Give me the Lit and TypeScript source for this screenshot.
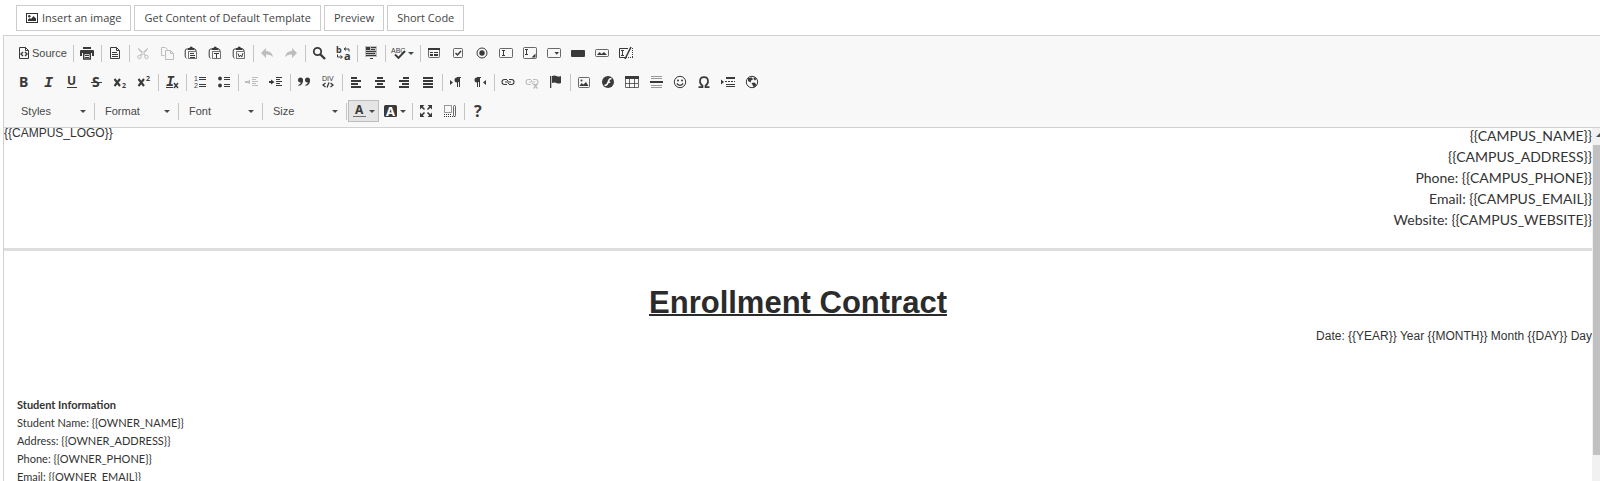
import { LitElement, html, css, svg, nothing, TemplateResult } from "lit";
import { customElement } from "lit/decorators.js";
import { classMap } from "lit/directives/class-map.js";

const page = svg`<path d="M3.5 2.5h6l3 3v8h-9z" fill="none" stroke="currentColor"/><path d="M9.500 2.500v3h3" fill="none" stroke="currentColor"/>`;
const clip = svg`<path d="M5 4H3.200q-1 1-1 2v5q0 1.500 1.500 2.500M11.500 4q1.500 0 1.500 2" fill="none" stroke="currentColor"/><path d="M5 5V3h1.500q.2-1.500 1.700-1.500T9.900 3h1.600v2z"/><path d="M5.500 6.500h8v7h-8z" fill="none" stroke="currentColor" opacity=".7"/>`;
const lines = (rows: number[][]) =>
  rows.map(([x, y, w, h]) => svg`<rect x=${x} y=${y} width=${w} height=${h}></rect>`);
const box = (x: number, y: number, w: number, h: number) =>
  svg`<rect x=${x} y=${y} width=${w} height=${h} rx="1" fill="none" stroke="currentColor" opacity=".75"></rect>`;
const link = svg`<path d="M7 5.500H4.500q-2.500 0-2.500 2.500t2.500 2.500H7M9 5.500h2.500q2.500 0 2.500 2.500t-2.500 2.500H9M5 8h6M7.500 6v1M8.500 9v1" fill="none" stroke="currentColor" stroke-width="1.100"/>`;

const icons: Record<string, TemplateResult> = {
  source: svg`${page}<path d="M7 7 5 9l2 2M9 7l2 2-2 2" fill="none" stroke="currentColor" stroke-width="1.400"/>`,
  print: svg`<path d="M4 2h8v2H4zM2 5h12q1 0 1 1v5h-2V8H3v3H1V6q0-1 1-1z"/><path d="M4.700 8.500h6.600V14H4.700z" fill="none" stroke="currentColor" stroke-width="1.400"/>${lines([[6, 10, 4, 1], [6, 12, 4, 1]])}`,
  preview: svg`${page}${lines([[5, 7, 5, 1], [5, 9, 6, 1], [5, 11, 6, 1]])}`,
  cut: svg`<path d="M3 2.500q0 2 1.500 3.500L10 11l1-1zM13 2.500q0 2-1.500 3.500L6 11l-1-1z"/><circle cx="4.500" cy="12" r="1.700" fill="none" stroke="currentColor"/><circle cx="11.500" cy="12" r="1.700" fill="none" stroke="currentColor"/>`,
  copy: svg`<path d="M5.500 10.500h-3v-8h4l2 2v1M6.500 5.500h5l3 3v6h-8zM11.500 5.500v3h3" fill="none" stroke="currentColor"/>`,
  paste: svg`${clip}${lines([[7, 8, 4, 1], [7, 10, 5, 1], [7, 12, 5, 1]])}`,
  pasteText: svg`${clip}${lines([[7, 8, 5, 1], [9, 8, 1, 5]])}`,
  pasteWord: svg`${clip}<path d="M7 8.500 8.300 12l1.200-2 1.200 2L12 8" fill="none" stroke="currentColor"/>`,
  undo: svg`<path d="M7 3v3q6 0 7 6-2.500-3-7-2.500V13L2 8z"/>`,
  redo: svg`<path d="M9 3v3q-6 0-7 6 2.500-3 7-2.500V13l5-5z"/>`,
  find: svg`<circle cx="6.500" cy="6.500" r="3.700" fill="none" stroke="currentColor" stroke-width="1.800"/><path d="m9 9 5 5" stroke="currentColor" stroke-width="2.400"/>`,
  replace: svg`<text class="ib" x="1" y="7.500" font-size="9">b</text><text class="ib" x="9" y="14.500" font-size="11">a</text><path d="M14 6.500V4H9.500M11 2.500 9 4l2 1.500M2.500 9.500V12H7M5.500 10.500l2 1.500-2 1.500" fill="none" stroke="currentColor"/>`,
  selectAll: svg`<path d="M2 1h12v11H2z" opacity=".3"/>${lines([[3, 2, 4, 3], [8, 2, 5, 1], [8, 4, 4, 1], [3, 6, 10, 1], [3, 8, 9, 1], [3, 10, 10, 1], [7, 13, 3, 1]])}`,
  spell: svg`<text class="it" x="0" y="7.500" font-size="7">ABC</text><path d="m4 9.500 3.500 3.500L14 6" fill="none" stroke="currentColor" stroke-width="1.900"/>`,
  form: svg`${box(2.5, 3.5, 11, 9)}${lines([[2, 3, 12, 2], [4, 7, 3, 1], [8, 7, 4, 1], [4, 9, 3, 2], [8, 9, 4, 2]])}`,
  checkbox: svg`${box(3.5, 3.5, 9, 9)}<path d="m5.500 8 2 2 3.500-4" fill="none" stroke="currentColor" stroke-width="1.500"/>`,
  radio: svg`<circle cx="8" cy="8" r="5" fill="none" stroke="currentColor"/><circle cx="8" cy="8" r="2.700"/>`,
  textfield: svg`${box(1.5, 3.5, 13, 9)}${lines([[4, 5, 3, 1], [5, 5, 1, 6], [4, 10, 3, 1]])}`,
  textarea: svg`${box(1.5, 2.5, 13, 11)}${lines([[3, 4, 3, 1], [4, 4, 1, 5], [3, 9, 3, 1]])}<path d="M13.500 8.500v4h-4z"/>`,
  select: svg`${box(1.5, 3.5, 13, 9)}<path d="M8.500 7h4.500l-2.200 2.700z"/>`,
  button: svg`<rect x="1" y="5" width="14" height="7" rx="1"/>`,
  imageButton: svg`${box(1.5, 4.5, 13, 7)}<path d="m3 10 2.500-3 2 2 2.500-2 3 3z"/>`,
  hidden: svg`<path d="M10 3.500H1.500v9H7" fill="none" stroke="currentColor"/><path d="M12 3.500h3M14.500 5v8M8 12.500h7" fill="none" stroke="currentColor" stroke-dasharray="1 1"/>${lines([[3, 5, 3, 1], [4, 5, 1, 6], [3, 10, 3, 1]])}<path d="m13 2-6 12" stroke="currentColor" stroke-width="1.600"/>`,
  bold: svg`<text class="ib" x="3" y="13" font-size="14">B</text>`,
  italic: svg`<text class="im" x="4" y="13" font-size="15">I</text>`,
  underline: svg`<text class="ib" x="3" y="11" font-size="12">U</text><rect x="3" y="13" width="10" height="1"/>`,
  strike: svg`<text class="ib" x="4" y="13" font-size="14">S</text><rect x="3" y="8" width="11" height="1"/>`,
  sub: svg`<path d="m2.500 5 5.500 7M8 5l-5.500 7" stroke="currentColor" stroke-width="2.100"/><text class="ib" x="10" y="14" font-size="7">2</text>`,
  sup: svg`<path d="m2.500 5 5.500 7M8 5l-5.500 7" stroke="currentColor" stroke-width="2.100"/><text class="ib" x="10" y="7" font-size="7">2</text>`,
  removeFormat: svg`<text class="im" x="2" y="12" font-size="14">I</text><path d="m10 9 4 5M14 9l-4 5" stroke="currentColor" stroke-width="1.400"/><rect x="2" y="13" width="7" height="1"/>`,
  ol: svg`<text class="it" x="2" y="7" font-size="7">1</text><text class="it" x="2" y="14" font-size="7">2</text>${lines([[7, 3, 7, 1], [7, 5, 7, 1], [7, 10, 7, 1], [7, 12, 7, 1]])}`,
  ul: svg`<circle cx="4" cy="4.500" r="1.900"/><circle cx="4" cy="11.500" r="1.900"/>${lines([[8, 3, 6, 1], [8, 5, 6, 1], [8, 10, 6, 1], [8, 12, 6, 1]])}`,
  outdent: svg`<path d="M6 5.500v5L3 8z"/>${lines([[1, 7, 4, 2], [8, 3, 6, 1], [8, 5, 4, 1], [8, 7, 6, 1], [8, 9, 4, 1], [8, 11, 6, 1]])}`,
  indent: svg`<path d="M3 5.500v5L6.500 8z"/>${lines([[1, 7, 4, 2], [8, 3, 6, 1], [8, 5, 4, 1], [8, 7, 6, 1], [8, 9, 4, 1], [8, 11, 6, 1]])}`,
  quote: svg`<circle cx="4.500" cy="6" r="2.500"/><path d="M7 6q.3 5-4.500 6v-1.200Q5 10 5 7.500z"/><circle cx="11.500" cy="6" r="2.500"/><path d="M14 6q.3 5-4.500 6v-1.200q2.500-.8 2.500-3.300z"/>`,
  div: svg`<text class="it" x="2" y="7" font-size="7">DIV</text><path d="M5.500 9 3 11l2.500 2M10.500 9l2.500 2-2.500 2M9 8.500 7 13.500" fill="none" stroke="currentColor" stroke-width="1.300"/>`,
  left: svg`${lines([[3, 3, 6, 2], [3, 6, 10, 2], [3, 9, 7, 2], [3, 12, 10, 2]])}`,
  center: svg`${lines([[5, 3, 6, 2], [3, 6, 10, 2], [5, 9, 6, 2], [3, 12, 10, 2]])}`,
  right: svg`${lines([[7, 3, 6, 2], [3, 6, 10, 2], [6, 9, 7, 2], [3, 12, 10, 2]])}`,
  justify: svg`${lines([[3, 3, 10, 2], [3, 6, 10, 2], [3, 9, 10, 2], [3, 12, 10, 2]])}`,
  ltr: svg`<path d="M2 6v5l3-2.500z"/><circle cx="9" cy="6" r="2.500"/>${lines([[9, 3, 1, 10], [11, 3, 1, 10], [9, 3, 4, 1]])}`,
  rtl: svg`<path d="M14 6v5l-3-2.500z"/><circle cx="5" cy="6" r="2.500"/>${lines([[5, 3, 1, 10], [7, 3, 1, 10], [5, 3, 4, 1]])}`,
  link: svg`${link}`,
  unlink: svg`${link}<path d="m9.500 10 4 4.500M13.500 10l-4 4.500" stroke="currentColor" stroke-width="1.400"/>`,
  anchor: svg`<path d="M2 2h1.300v12H2zM4 2q2.500-1 4.500 0T13 2v7q-2.500 1-4.500 0T4 9z"/>`,
  image: svg`${box(2.5, 3.5, 11, 10)}<circle cx="5.500" cy="6.500" r="1"/><path d="m3.500 12 2-3 2 1.500L10 8l2.500 4z"/>`,
  flash: svg`<circle cx="8" cy="8" r="6"/><path d="M11.500 4.500q-2.500 0-3.300 3.500T4.500 11.500M7.500 8.200h2.700" fill="none" stroke="#f8f8f8" stroke-width="1.500"/>`,
  table: svg`${lines([[1, 2, 14, 3]])}<path d="M1.500 4v9.500h13V4M1 9.500h13M5.500 5v9M10.500 5v9" fill="none" stroke="currentColor" opacity=".75"/>`,
  hr: svg`<path d="M3 2h11v1H3zM3 4h11v1H3zM3 11h11v1H3zM3 13h11v1H3z" opacity=".5"/>${lines([[2, 7, 13, 2]])}`,
  smiley: svg`<circle cx="8" cy="8" r="5.700" fill="none" stroke="currentColor"/><circle cx="6" cy="6.500" r="1"/><circle cx="10" cy="6.500" r="1"/><path d="M4.800 9.500q3.200 3.700 6.400 0" fill="none" stroke="currentColor" stroke-width="1.200"/>`,
  omega: svg`<path d="M2.500 13.200h4v-1.500q-2.500-1.500-2.500-4.500 0-4 4-4t4 4q0 3-2.500 4.500v1.500h4" fill="none" stroke="currentColor" stroke-width="1.700"/>`,
  pageBreak: svg`<path d="M1 5.500v5L4 8z"/>${lines([[6, 3, 9, 2], [5, 7, 2, 1], [8, 7, 2, 1], [11, 7, 2, 1], [14, 7, 1, 1], [6, 10, 9, 1], [6, 12, 9, 1]])}`,
  iframe: svg`<circle cx="8" cy="8" r="5.700" fill="none" stroke="currentColor"/><path d="m4 4 4-.5 1 2-2 1v2L4 7zM10 3l2.500 2-1.500 1.500L9.500 5zM7.500 9l3-.5 2 2-2.500 3.300z"/>`,
  textColor: svg`<text class="ib" x="3" y="11" font-size="12">A</text><rect x="1" y="13" width="13" height="1" opacity=".7"/>`,
  bgColor: svg`<rect x="1" y="2" width="13" height="12" rx="1.500"/><text class="ib inv" x="3" y="12.500" font-size="13">A</text>`,
  maximize: svg`<path d="M2 2h4.500L2 6.500zM14 2v4.500L9.500 2zM2 14V9.500L6.500 14zM14 14H9.500L14 9.500z"/><path d="m3 3 3.500 3.500M13 3 9.500 6.500M3 13l3.500-3.500M13 13 9.500 9.500" stroke="currentColor" stroke-width="1.600"/>`,
  blocks: svg`<path d="M2.500 2.500h7v7h-7zM2 11.500h8M2 13.500h11" fill="none" stroke="currentColor" stroke-dasharray="1 1"/><rect x="11.500" y="2.500" width="2" height="11" rx="1" fill="none" stroke="currentColor" opacity=".75"/>`,
  help: svg`<text class="ib" x="4" y="14" font-size="16">?</text>`,
};

interface Item {
  icon: string;
  title: string;
  text?: string;
  off?: boolean;
  on?: boolean;
  menu?: boolean;
}
const b = (icon: string, title: string, extra: Partial<Item> = {}): Item => ({ icon, title, ...extra });

const rowOne: Item[][] = [
  [b("source", "Source", { text: "Source" })],
  [b("print", "Print")],
  [b("preview", "Templates")],
  [b("cut", "Cut", { off: true }), b("copy", "Copy", { off: true }), b("paste", "Paste"), b("pasteText", "Paste as plain text"), b("pasteWord", "Paste from Word")],
  [b("undo", "Undo", { off: true }), b("redo", "Redo", { off: true })],
  [b("find", "Find"), b("replace", "Replace")],
  [b("selectAll", "Select All")],
  [b("spell", "Spell Check As You Type", { menu: true })],
  [b("form", "Form"), b("checkbox", "Checkbox"), b("radio", "Radio Button"), b("textfield", "Text Field"), b("textarea", "Textarea"), b("select", "Selection Field"), b("button", "Button"), b("imageButton", "Image Button"), b("hidden", "Hidden Field")],
];
const rowTwo: Item[][] = [
  [b("bold", "Bold"), b("italic", "Italic"), b("underline", "Underline"), b("strike", "Strikethrough"), b("sub", "Subscript"), b("sup", "Superscript")],
  [b("removeFormat", "Remove Format")],
  [b("ol", "Numbered List"), b("ul", "Bulleted List")],
  [b("outdent", "Decrease Indent", { off: true }), b("indent", "Increase Indent")],
  [b("quote", "Block Quote"), b("div", "Create Div Container")],
  [b("left", "Align Left"), b("center", "Center"), b("right", "Align Right"), b("justify", "Justify")],
  [b("ltr", "Left to Right"), b("rtl", "Right to Left")],
  [b("link", "Link"), b("unlink", "Unlink", { off: true }), b("anchor", "Anchor")],
  [b("image", "Image"), b("flash", "Flash"), b("table", "Table"), b("hr", "Horizontal Line"), b("smiley", "Smiley"), b("omega", "Special Character"), b("pageBreak", "Page Break"), b("iframe", "IFrame")],
];
const rowThree: Item[][] = [
  [b("textColor", "Text Color", { menu: true, on: true }), b("bgColor", "Background Color", { menu: true })],
  [b("maximize", "Maximize"), b("blocks", "Show Blocks")],
  [b("help", "About")],
];

@customElement("editor-toolbar")
export class EditorToolbar extends LitElement {
  static styles = css`
    :host {
      display: flex;
      flex-direction: column;
      gap: 5px;
      padding: 5px 8px 4px;
      background: #f8f8f8;
      border: 1px solid #d1d1d1;
      border-right: 0;
      font: 11px/16px "Liberation Sans", Arial, sans-serif;
      color: #484848;
    }
    .row {
      display: flex;
      align-items: center;
      height: 24px;
    }
    .sep {
      width: 1px;
      height: 17px;
      margin: 0 1px 0 2px;
      background: #c4c4c4;
    }
    .tool {
      display: flex;
      align-items: center;
      box-sizing: border-box;
      height: 22px;
      padding: 0 3px;
      border: 1px solid transparent;
      background: none;
      font: inherit;
      color: #3a3a3a;
    }
    .label {
      color: #484848;
    }
    .off {
      color: #bdbdbd;
    }
    .on {
      background: #e5e5e5;
      border-color: #bcbcbc;
    }
    .icon {
      display: block;
      flex: none;
      width: 16px;
      height: 16px;
      overflow: visible;
      fill: currentColor;
    }
    .caret {
      flex: none;
      border: 3px solid transparent;
      border-top-color: #484848;
      border-bottom: 0;
    }
    .icon + .caret {
      margin-left: 1px;
    }
    .combo {
      display: flex;
      align-items: center;
      box-sizing: border-box;
      width: 80px;
      padding: 0 6px 0 9px;
    }
    .pick {
      flex: 1;
      min-width: 0;
      appearance: none;
      border: 0;
      padding: 0;
      background: none;
      font: inherit;
      color: inherit;
    }
    .ib {
      font-family: "Noto Sans", sans-serif;
      font-weight: 700;
    }
    .it {
      font-family: "Liberation Sans", sans-serif;
    }
    .im {
      font-family: "Liberation Mono", monospace;
      font-weight: 700;
      font-style: italic;
    }
    .inv {
      fill: #fff;
    }
  `;

  private tool(i: Item) {
    return html`<button
      type="button"
      class=${classMap({ tool: true, off: !!i.off, on: !!i.on })}
      title=${i.title}
      aria-label=${i.title}
      ?disabled=${!!i.off}
    ><svg class="icon" viewBox="0 0 16 16" aria-hidden="true">${icons[i.icon]}</svg>${i.text ? html`<span class="label">${i.text}</span>` : nothing}${i.menu ? html`<span class="caret"></span>` : nothing}</button>`;
  }

  private groups(groups: Item[][]) {
    return groups.map(
      (g, n) => html`${n ? html`<span class="sep"></span>` : nothing}${g.map((i) => this.tool(i))}`
    );
  }

  render() {
    return html`
      <div class="row">${this.groups(rowOne)}</div>
      <div class="row">${this.groups(rowTwo)}</div>
      <div class="row">
        ${["Styles", "Format", "Font", "Size"].map(
          (name) => html`<label class="combo"
              ><select class="pick" aria-label=${name}><option>${name}</option></select
              ><span class="caret"></span></label
            ><span class="sep"></span>`
        )}
        ${this.groups(rowThree)}
      </div>
    `;
  }
}

@customElement("app-root")
export class AppRoot extends LitElement {
  static styles = css`
    :host {
      display: flex;
      flex-direction: column;
      height: 100vh;
      overflow: hidden;
      background: #fff;
      font-family: "Liberation Sans", Arial, sans-serif;
      color: #333;
    }
    .actions {
      display: flex;
      gap: 3px;
      padding: 5px 16px 4px;
    }
    .action {
      display: flex;
      align-items: center;
      gap: 4px;
      height: 26px;
      padding: 0 9px;
      border: 1px solid #ccc;
      background: #fff;
      font: 11px/18px "Open Sans", sans-serif;
      color: #444;
    }
    .pic {
      width: 12px;
      height: 10px;
      fill: #333;
    }
    .editor {
      flex: 1;
      min-height: 0;
      display: flex;
      flex-direction: column;
      padding-left: 3px;
    }
    .view {
      flex: 1;
      min-height: 0;
      display: flex;
      border-left: 1px solid #d1d1d1;
    }
    .doc {
      flex: 1;
      overflow: hidden;
      font-size: 12px;
      line-height: 20px;
    }
    .head {
      display: flex;
      justify-content: space-between;
      align-items: flex-start;
      line-height: 10px;
    }
    .campus {
      padding-bottom: 18px;
      text-align: right;
      font: 14px/21px Lato, Carlito, sans-serif;
    }
    .first {
      margin-top: -3px;
    }
    .rule {
      height: 3px;
      margin: 0;
      border: 0;
      background: #ddd;
    }
    .title {
      margin: 32px 0 0;
      text-align: center;
      font-size: 31px;
      line-height: 40px;
      color: #2b2b2b;
      text-decoration: underline;
      text-decoration-thickness: 2px;
    }
    .date {
      margin: 3px 0 0;
      text-align: right;
    }
    .student {
      margin: 50px 13px 0;
      font: 11px/18px Lato, Carlito, sans-serif;
    }
    .scroll {
      flex: none;
      width: 8px;
      overflow: hidden;
      display: flex;
      flex-direction: column;
      background: #f1f1f1;
    }
    .up {
      box-sizing: border-box;
      height: 17px;
      padding: 5px 0 0 4px;
    }
    .tri {
      width: 0;
      border: 4px solid transparent;
      border-top: 0;
      border-bottom-color: #505050;
    }
    .thumb {
      flex: 12;
      margin-left: 1px;
      background: #c1c1c1;
    }
    .rest {
      flex: 1;
    }
  `;

  render() {
    return html`
      <div class="actions">
        <button type="button" class="action">
          <svg class="pic" viewBox="0 0 12 10" aria-hidden="true">
            <path fill-rule="evenodd" d="M0 0h12v10H0zM1 1v8h10V1z" />
            <circle cx="3.300" cy="3.200" r="1.200" />
            <path d="M2 8V6.500l2-1.500 1 1 2.500-3L10 5.500V8z" />
          </svg>
          Insert an image
        </button>
        <button type="button" class="action">Get Content of Default Template</button>
        <button type="button" class="action">Preview</button>
        <button type="button" class="action">Short Code</button>
      </div>
      <div class="editor">
        <editor-toolbar></editor-toolbar>
        <div class="view">
          <div class="doc">
            <div class="head">
              <div>{{CAMPUS_LOGO}}</div>
              <div class="campus">
                <div class="first">{{CAMPUS_NAME}}</div>
                <div>{{CAMPUS_ADDRESS}}</div>
                <div>Phone: {{CAMPUS_PHONE}}</div>
                <div>Email: {{CAMPUS_EMAIL}}</div>
                <div>Website: {{CAMPUS_WEBSITE}}</div>
              </div>
            </div>
            <hr class="rule" />
            <h1 class="title">Enrollment Contract</h1>
            <p class="date">Date: {{YEAR}} Year {{MONTH}} Month {{DAY}} Day</p>
            <div class="student">
              <div><strong>Student Information</strong></div>
              <div>Student Name: {{OWNER_NAME}}</div>
              <div>Address: {{OWNER_ADDRESS}}</div>
              <div>Phone: {{OWNER_PHONE}}</div>
              <div>Email: {{OWNER_EMAIL}}</div>
            </div>
          </div>
          <div class="scroll" aria-hidden="true">
            <div class="up"><div class="tri"></div></div>
            <div class="thumb"></div>
            <div class="rest"></div>
          </div>
        </div>
      </div>
    `;
  }
}
